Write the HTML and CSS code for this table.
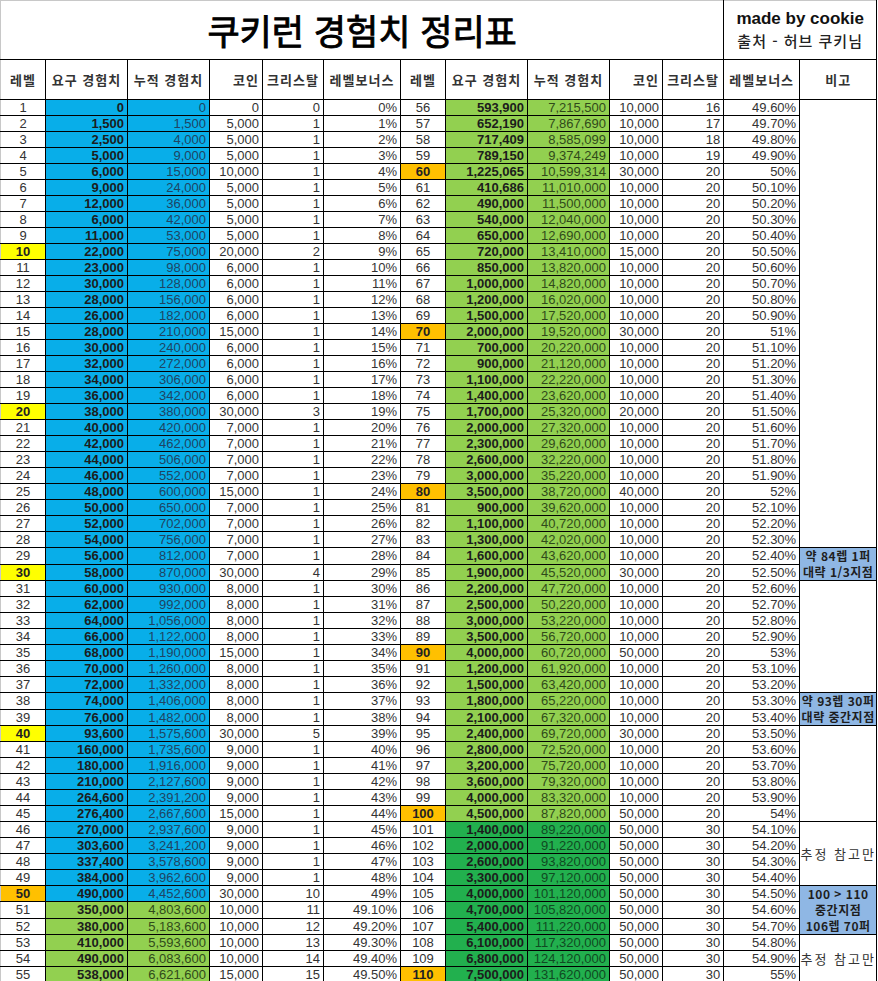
FILE: index.html
```html
<!DOCTYPE html>
<html lang="ko">
<head>
<meta charset="utf-8">
<title>쿠키런 경험치 정리표</title>
<link rel="stylesheet" href="styles.css">
</head>
<body>
<table class="sheet">
  <colgroup>
    <col class="c-lv"><col class="c-req"><col class="c-cum"><col class="c-coin"><col class="c-crys"><col class="c-bonus">
    <col class="c-lv"><col class="c-req"><col class="c-cum"><col class="c-coin"><col class="c-crys"><col class="c-bonus2"><col class="c-note">
  </colgroup>
  <thead>
    <tr class="title-row">
      <td class="title" colspan="11">쿠키런 경험치 정리표</td>
      <td class="credit" colspan="2"><div class="made">made by cookie</div><div class="src">출처 - 허브 쿠키님</div></td>
    </tr>
    <tr class="head-row">
      <th class="h-c">레벨</th><th class="h-c">요구 경험치</th><th class="h-c">누적 경험치</th><th class="h-r">코인</th><th class="h-c">크리스탈</th><th class="h-c">레벨보너스</th>
      <th class="h-c">레벨</th><th class="h-c">요구 경험치</th><th class="h-c">누적 경험치</th><th class="h-r">코인</th><th class="h-c">크리스탈</th><th class="h-c">레벨보너스</th><th class="h-c">비고</th>
    </tr>
  </thead>
  <tbody id="rows"></tbody>
</table>
<script src="script.js"></script>
</body>
</html>
```

FILE: styles.css
```css
html, body {
  margin: 0;
  padding: 0;
  background: #fff;
}
body {
  font-family: "Liberation Sans", "Noto Sans CJK KR", sans-serif;
  color: #333;
}
.sheet {
  border-collapse: collapse;
  table-layout: fixed;
  width: 877px;
  border-top: 1px solid #c8c8c8;
  border-left: 1px solid #c8c8c8;
}
.c-lv { width: 45px; }
.c-req { width: 82px; }
.c-cum { width: 82px; }
.c-coin { width: 53px; }
.c-crys { width: 61px; }
.c-bonus { width: 77px; }
.c-bonus2 { width: 76px; }
.c-note { width: 77px; }

.sheet td, .sheet th {
  border: 1px solid #000;
  padding: 0 3px;
  font-size: 13px;
  line-height: 15px;
  white-space: nowrap;
  overflow: hidden;
  color: #333;
  font-weight: normal;
}
.sheet tr > :first-child { border-left: none; }
.title-row td { border-top: none; }

.title-row { height: 59px; }
.title {
  font-family: "Noto Sans CJK KR", sans-serif;
  font-weight: 900;
  font-size: 35px !important;
  line-height: 40px !important;
  letter-spacing: 0;
  text-align: center;
  color: #000 !important;
  -webkit-text-stroke: 0.9px #000;
}
.credit {
  text-align: center;
  color: #111 !important;
}
.made {
  font-family: "Liberation Sans", sans-serif;
  font-weight: 700;
  font-size: 17px;
  line-height: 22px;
  color: #111;
}
.src {
  font-family: "Noto Sans CJK KR", sans-serif;
  font-weight: 500;
  font-size: 15px;
  line-height: 22px;
  letter-spacing: 1px;
  color: #222;
}

.head-row { height: 40px; }
.head-row th {
  font-family: "Noto Sans CJK KR", sans-serif;
  font-weight: 700;
  font-size: 13px;
  letter-spacing: 1px;
  color: #333;
}
.h-c { text-align: center; }
.h-r { text-align: right; }

#rows tr { height: 16px; }
.lv { text-align: center; }
.num { text-align: right; }
.exp { padding-right: 4px; }
.b { font-weight: 700 !important; color: #1c1c1c !important; }
.blue { background: #08aee9; }
.blue.cum { color: #1f4463 !important; }
.lg { background: #92d050; }
.lg.cum { color: #304a1a !important; }
.dg { background: #22b04e; }
.dg.cum { color: #104a22 !important; }
.yel { background: #ffff00; font-weight: 700 !important; color: #222 !important; }
.org { background: #ffc000; font-weight: 700 !important; color: #222 !important; }

.note {
  text-align: center;
  font-family: "Noto Sans CJK KR", sans-serif;
  letter-spacing: 0.5px;
  font-size: 12px !important;
  line-height: 16px !important;
  padding: 0 !important;
}
.note-blue {
  background: #8fb7e4;
  font-weight: 700 !important;
  color: #1e1e1e !important;
}
.note-plain {
  font-size: 13px !important;
  letter-spacing: 2px;
  color: #333;
}
```

FILE: script.js
```js
var L = [
["0","0","0","0","0%"],["1,500","1,500","5,000","1","1%"],["2,500","4,000","5,000","1","2%"],["5,000","9,000","5,000","1","3%"],
["6,000","15,000","10,000","1","4%"],["9,000","24,000","5,000","1","5%"],["12,000","36,000","5,000","1","6%"],["6,000","42,000","5,000","1","7%"],
["11,000","53,000","5,000","1","8%"],["22,000","75,000","20,000","2","9%"],["23,000","98,000","6,000","1","10%"],["30,000","128,000","6,000","1","11%"],
["28,000","156,000","6,000","1","12%"],["26,000","182,000","6,000","1","13%"],["28,000","210,000","15,000","1","14%"],["30,000","240,000","6,000","1","15%"],
["32,000","272,000","6,000","1","16%"],["34,000","306,000","6,000","1","17%"],["36,000","342,000","6,000","1","18%"],["38,000","380,000","30,000","3","19%"],
["40,000","420,000","7,000","1","20%"],["42,000","462,000","7,000","1","21%"],["44,000","506,000","7,000","1","22%"],["46,000","552,000","7,000","1","23%"],
["48,000","600,000","15,000","1","24%"],["50,000","650,000","7,000","1","25%"],["52,000","702,000","7,000","1","26%"],["54,000","756,000","7,000","1","27%"],
["56,000","812,000","7,000","1","28%"],["58,000","870,000","30,000","4","29%"],["60,000","930,000","8,000","1","30%"],["62,000","992,000","8,000","1","31%"],
["64,000","1,056,000","8,000","1","32%"],["66,000","1,122,000","8,000","1","33%"],["68,000","1,190,000","15,000","1","34%"],["70,000","1,260,000","8,000","1","35%"],
["72,000","1,332,000","8,000","1","36%"],["74,000","1,406,000","8,000","1","37%"],["76,000","1,482,000","8,000","1","38%"],["93,600","1,575,600","30,000","5","39%"],
["160,000","1,735,600","9,000","1","40%"],["180,000","1,916,000","9,000","1","41%"],["210,000","2,127,600","9,000","1","42%"],["264,600","2,391,200","9,000","1","43%"],
["276,400","2,667,600","15,000","1","44%"],["270,000","2,937,600","9,000","1","45%"],["303,600","3,241,200","9,000","1","46%"],["337,400","3,578,600","9,000","1","47%"],
["384,000","3,962,600","9,000","1","48%"],["490,000","4,452,600","30,000","10","49%"],["350,000","4,803,600","10,000","11","49.10%"],["380,000","5,183,600","10,000","12","49.20%"],
["410,000","5,593,600","10,000","13","49.30%"],["490,000","6,083,600","10,000","14","49.40%"],["538,000","6,621,600","15,000","15","49.50%"]
];
var R = [
["593,900","7,215,500","10,000","16","49.60%"],["652,190","7,867,690","10,000","17","49.70%"],["717,409","8,585,099","10,000","18","49.80%"],["789,150","9,374,249","10,000","19","49.90%"],
["1,225,065","10,599,314","30,000","20","50%"],["410,686","11,010,000","10,000","20","50.10%"],["490,000","11,500,000","10,000","20","50.20%"],["540,000","12,040,000","10,000","20","50.30%"],
["650,000","12,690,000","10,000","20","50.40%"],["720,000","13,410,000","15,000","20","50.50%"],["850,000","13,820,000","10,000","20","50.60%"],["1,000,000","14,820,000","10,000","20","50.70%"],
["1,200,000","16,020,000","10,000","20","50.80%"],["1,500,000","17,520,000","10,000","20","50.90%"],["2,000,000","19,520,000","30,000","20","51%"],["700,000","20,220,000","10,000","20","51.10%"],
["900,000","21,120,000","10,000","20","51.20%"],["1,100,000","22,220,000","10,000","20","51.30%"],["1,400,000","23,620,000","10,000","20","51.40%"],["1,700,000","25,320,000","20,000","20","51.50%"],
["2,000,000","27,320,000","10,000","20","51.60%"],["2,300,000","29,620,000","10,000","20","51.70%"],["2,600,000","32,220,000","10,000","20","51.80%"],["3,000,000","35,220,000","10,000","20","51.90%"],
["3,500,000","38,720,000","40,000","20","52%"],["900,000","39,620,000","10,000","20","52.10%"],["1,100,000","40,720,000","10,000","20","52.20%"],["1,300,000","42,020,000","10,000","20","52.30%"],
["1,600,000","43,620,000","10,000","20","52.40%"],["1,900,000","45,520,000","30,000","20","52.50%"],["2,200,000","47,720,000","10,000","20","52.60%"],["2,500,000","50,220,000","10,000","20","52.70%"],
["3,000,000","53,220,000","10,000","20","52.80%"],["3,500,000","56,720,000","10,000","20","52.90%"],["4,000,000","60,720,000","50,000","20","53%"],["1,200,000","61,920,000","10,000","20","53.10%"],
["1,500,000","63,420,000","10,000","20","53.20%"],["1,800,000","65,220,000","10,000","20","53.30%"],["2,100,000","67,320,000","10,000","20","53.40%"],["2,400,000","69,720,000","30,000","20","53.50%"],
["2,800,000","72,520,000","10,000","20","53.60%"],["3,200,000","75,720,000","10,000","20","53.70%"],["3,600,000","79,320,000","10,000","20","53.80%"],["4,000,000","83,320,000","10,000","20","53.90%"],
["4,500,000","87,820,000","50,000","20","54%"],["1,400,000","89,220,000","50,000","30","54.10%"],["2,000,000","91,220,000","50,000","30","54.20%"],["2,600,000","93,820,000","50,000","30","54.30%"],
["3,300,000","97,120,000","50,000","30","54.40%"],["4,000,000","101,120,000","50,000","30","54.50%"],["4,700,000","105,820,000","50,000","30","54.60%"],["5,400,000","111,220,000","50,000","30","54.70%"],
["6,100,000","117,320,000","50,000","30","54.80%"],["6,800,000","124,120,000","50,000","30","54.90%"],["7,500,000","131,620,000","50,000","30","55%"]
];
var NOTES = {
  1: [28, "", ""],
  29: [2, "약 84렙 1퍼<br>대략 1/3지점", "note note-blue"],
  31: [7, "", ""],
  38: [2, "약 93렙 30퍼<br>대략 중간지점", "note note-blue"],
  40: [6, "", ""],
  46: [4, "추정 참고만", "note note-plain"],
  50: [3, "100 &gt; 110<br>중간지점<br>106렙 70퍼", "note note-blue"],
  53: [3, "추정 참고만", "note note-plain"]
};
function lvClass(n) {
  if (n === 10 || n === 20 || n === 30 || n === 40) return "lv yel";
  if (n % 10 === 0) return "lv org";
  return "lv";
}
var html = "";
for (var i = 0; i < 55; i++) {
  var a = L[i], b = R[i], ln = i + 1, rn = i + 56;
  var lc = ln <= 50 ? "blue" : "lg";
  var rc = rn <= 100 ? "lg" : "dg";
  html += "<tr>";
  html += '<td class="' + lvClass(ln) + '">' + ln + "</td>";
  html += '<td class="num exp b ' + lc + '">' + a[0] + "</td>";
  html += '<td class="num exp cum ' + lc + '">' + a[1] + "</td>";
  html += '<td class="num">' + a[2] + "</td>";
  html += '<td class="num">' + a[3] + "</td>";
  html += '<td class="num">' + a[4] + "</td>";
  html += '<td class="' + lvClass(rn) + '">' + rn + "</td>";
  html += '<td class="num exp b ' + rc + '">' + b[0] + "</td>";
  html += '<td class="num exp cum ' + rc + '">' + b[1] + "</td>";
  html += '<td class="num">' + b[2] + "</td>";
  html += '<td class="num">' + b[3] + "</td>";
  html += '<td class="num">' + b[4] + "</td>";
  if (NOTES[ln]) {
    var nt = NOTES[ln];
    html += '<td rowspan="' + nt[0] + '" class="' + nt[2] + '">' + nt[1] + "</td>";
  }
  html += "</tr>";
}
document.getElementById("rows").innerHTML = html;
```
